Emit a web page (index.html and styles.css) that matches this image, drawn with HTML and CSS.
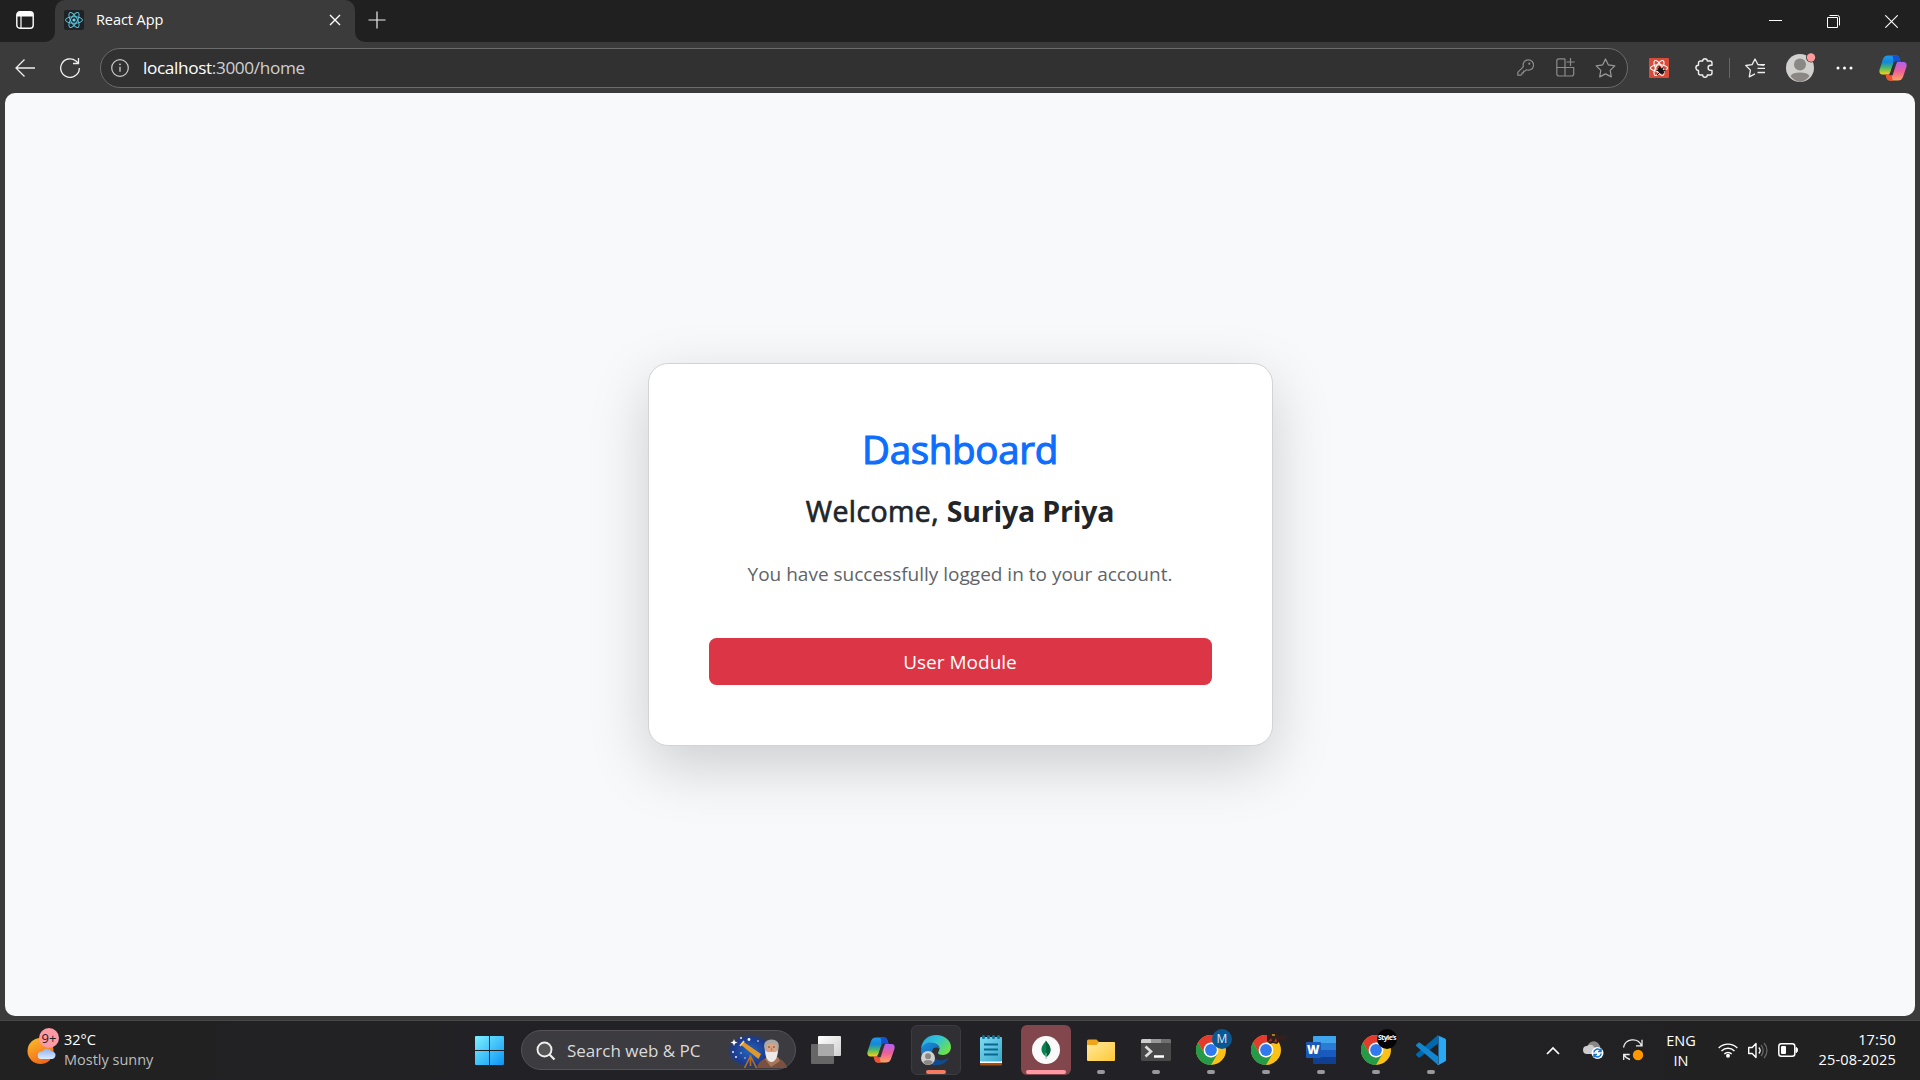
FILE: index.html
```html
<!DOCTYPE html>
<html lang="en">
<head>
<meta charset="utf-8">
<title>React App</title>
<link rel="stylesheet" href="styles.css">
</head>
<body>
<svg class="defs" width="0" height="0">
  <defs>
    <linearGradient id="cpA" x1="0" y1="0" x2="0" y2="1"><stop offset="0" stop-color="#1a9df0"/><stop offset=".35" stop-color="#1687d8"/><stop offset=".65" stop-color="#4bb86a"/><stop offset="1" stop-color="#ffd20a"/></linearGradient>
    <linearGradient id="cpB" x1="0" y1="0" x2="0" y2="1"><stop offset="0" stop-color="#b060f0"/><stop offset=".5" stop-color="#ef5f9a"/><stop offset="1" stop-color="#ffa45c"/></linearGradient>
    <linearGradient id="edgeA" x1="0" y1="0" x2="1" y2=".6"><stop offset="0" stop-color="#2aa5e0"/><stop offset=".5" stop-color="#2fc3d8"/><stop offset="1" stop-color="#6fe04a"/></linearGradient>
    <linearGradient id="edgeB" x1="0" y1="0" x2="1" y2="1"><stop offset="0" stop-color="#1b8fdc"/><stop offset="1" stop-color="#0c4f9c"/></linearGradient>
    <linearGradient id="win" x1="0" y1="0" x2="1" y2="1"><stop offset="0" stop-color="#7df0ff"/><stop offset="1" stop-color="#0a95f5"/></linearGradient>
    <linearGradient id="sun" x1="0" y1="0" x2=".5" y2="1"><stop offset="0" stop-color="#fcc02c"/><stop offset="1" stop-color="#f0691a"/></linearGradient>
    <linearGradient id="cloud" x1="0" y1="0" x2="0" y2="1"><stop offset="0" stop-color="#8fb2f0"/><stop offset="1" stop-color="#d9eafd"/></linearGradient>
    <linearGradient id="tvF" x1="0" y1="0" x2="1" y2="1"><stop offset="0" stop-color="#fff"/><stop offset="1" stop-color="#d0d0d0"/></linearGradient>
    <linearGradient id="folder" x1="0" y1="0" x2="1" y2="1"><stop offset="0" stop-color="#ffe9a0"/><stop offset="1" stop-color="#ffc934"/></linearGradient>
    <linearGradient id="note" x1="0" y1="0" x2="1" y2="1"><stop offset="0" stop-color="#7fdcf2"/><stop offset="1" stop-color="#38a9cc"/></linearGradient>
    <radialGradient id="sky"><stop offset="0" stop-color="#2467bd"/><stop offset=".75" stop-color="#1b3b91"/><stop offset="1" stop-color="#1b3b91" stop-opacity="0"/></radialGradient>
    <symbol id="copilot" viewBox="0 0 28 26">
      <path d="M9 .5h8c2.400 0 3 1.500 3.600 3.500l1 3h-3.800c-2.400 0-3.200 1.200-3.900 3.300l-2 6c-.7 2-1.500 3.200-3.800 3.200H3.500C.7 19.500-.1 17.500.6 14.500L4 4C5 1.500 6.500.5 9 .5z" fill="url(#cpA)"/>
      <path d="M13 .5h4c2.400 0 3 1.500 3.600 3.500l1 3h-3.800c-2 0-2.900.8-3.500 2C14.500 5 14.500 2 13 .5z" fill="#1550d5"/>
      <path d="M19 25.500h-8c-2.400 0-3-1.500-3.600-3.500l-.9-2.500H9c2.300 0 3.100-1.200 3.800-3.200l2-6c.7-2.100 1.500-3.300 3.900-3.300h5.800c2.800 0 3.600 2 2.900 5L24 22c-1 2.500-2.500 3.500-5 3.500z" fill="url(#cpB)"/>
      <path d="M6.500 19.500H9c2.300 0 3.100-1.200 3.800-3.200-.3 3-.2 7 1.200 9.200h-3c-2.400 0-3-1.500-3.600-3.500z" fill="#f3502e"/>
      <path d="M11.300 19.500l3.300-10c.5-1.400 1.300-2.500 2.700-2.500l-.6 1.500-3.600 11z" fill="#333" stroke="#333" stroke-width="1.400"/>
    </symbol>
    <symbol id="chrome" viewBox="0 0 30 30">
      <circle cx="15" cy="15" r="15" fill="#fcc117"/>
      <path d="M15 7.500H28A15 15 0 0 0 2 7.500L8.500 18.800z" fill="#e33b2e"/>
      <path d="M2 7.500A15 15 0 0 0 15 30l6.500-11.200L15 22.500 8.500 18.800z" fill="#259a49"/>
      <circle cx="15" cy="15" r="7.400" fill="#fff"/><circle cx="15" cy="15" r="5.900" fill="#3079ee"/>
    </symbol>
    <symbol id="person" viewBox="0 0 28 28">
      <circle cx="14" cy="14" r="14" fill="#d2d0ce"/><circle cx="14" cy="10.500" r="6" fill="#8a8785"/><path d="M4.500 22c1.500-2.700 5-3.500 9.500-3.500s8 .8 9.500 3.500A14 14 0 0 1 14 28a14 14 0 0 1-9.500-6z" fill="#8a8785"/>
    </symbol>
  </defs>
</svg>

<header class="tabbar">
  <div class="tabbar-menu">
    <svg width="18" height="18" viewBox="0 0 18 18"><rect x=".8" y=".8" width="16.400" height="16.400" rx="3" fill="none" stroke="#fff" stroke-width="1.400"/><path d="M1 4a3 3 0 0 1 3-3h10a3 3 0 0 1 3 3v1.500H1z" fill="#fff"/><path d="M5 5v12" stroke="#fff" stroke-width="1.200"/></svg>
  </div>
  <div class="tab-well">
    <div class="tab">
      <svg width="20" height="20" viewBox="0 0 20 20"><rect width="20" height="20" rx="2" fill="#202124"/><g fill="none" stroke="#58c4dc" stroke-width="1"><ellipse cx="10" cy="10" rx="8.500" ry="3.300"/><ellipse cx="10" cy="10" rx="8.500" ry="3.300" transform="rotate(60 10 10)"/><ellipse cx="10" cy="10" rx="8.500" ry="3.300" transform="rotate(120 10 10)"/></g><circle cx="10" cy="10" r="1.600" fill="#61dafb"/></svg>
      <span class="tab-title">React App</span>
      <svg width="12" height="12" viewBox="0 0 12 12"><path d="M1 1l10 10M11 1L1 11" stroke="#fff" stroke-width="1.400"/></svg>
    </div>
  </div>
  <div class="newtab"><svg width="18" height="18" viewBox="0 0 18 18"><path d="M9 .5v17M.5 9h17" stroke="#eee" stroke-width="1.200"/></svg></div>
  <div class="window-buttons">
    <div><svg width="13" height="13" viewBox="0 0 13 13"><path d="M0 5.500h13" stroke="#fff"/></svg></div>
    <div><svg width="13" height="13" viewBox="0 0 13 13"><path d="M.5 2.500h10v10H.5zM2.500.5h8a2 2 0 0 1 2 2v8" fill="none" stroke="#fff"/></svg></div>
    <div><svg width="13" height="13" viewBox="0 0 13 13"><path d="M.3.300l12.400 12.400M12.700.3L.3 12.700" stroke="#fff" stroke-width="1.100"/></svg></div>
  </div>
</header>

<nav class="toolbar">
  <div class="tool"><svg width="20" height="18" viewBox="0 0 20 18"><path d="M20 9H1M9.500.5L1 9l8.500 8.500" fill="none" stroke="#eee" stroke-width="1.300"/></svg></div>
  <div class="tool"><svg width="20" height="20" viewBox="0 0 20 20"><path d="M19.300 10A9.300 9.300 0 1 1 16 3l2.500 2.500M18.500 0v5.500H13" fill="none" stroke="#eee" stroke-width="1.300"/></svg></div>
  <div class="address">
    <div class="slot info"><svg width="18" height="18" viewBox="0 0 18 18"><circle cx="9" cy="9" r="8.300" fill="none" stroke="#ccc" stroke-width="1.200"/><path d="M9 7.800v5" stroke="#ccc" stroke-width="1.300"/><circle cx="9" cy="5.300" r=".9" fill="#ccc"/></svg></div>
    <div class="url">localhost<span>:3000/home</span></div>
    <div class="slot"><svg width="17" height="17" viewBox="0 0 17 17"><path d="M11 .8a5.200 5.200 0 1 1-1.600 10l-1.500 1.300H6.500v1.700H5v1.400l-1 1H.8v-2.900l5.600-5.600A5.200 5.200 0 0 1 11 .8z" fill="none" stroke="#8c8c8c" stroke-width="1.200" stroke-linejoin="round"/><circle cx="12.300" cy="4.700" r="1.100" fill="#8c8c8c"/></svg></div>
    <div class="slot"><svg width="19" height="19" viewBox="0 0 19 19"><path d="M9 .8H3A2.200 2.200 0 0 0 .8 3v12.800A2.200 2.200 0 0 0 3 18h12.500a2.200 2.200 0 0 0 2.200-2.200V9.500H.8M9 .8V18M14.500 0v8M10.500 4h8.300" fill="none" stroke="#8c8c8c" stroke-width="1.200"/></svg></div>
    <div class="slot"><svg width="21" height="20" viewBox="0 0 21 20"><path d="M10.500 1l2.900 5.900 6.400.9-4.600 4.600 1.100 6.500-5.800-3-5.800 3 1.100-6.500L1.200 7.800l6.400-.9z" fill="none" stroke="#999" stroke-width="1.200" stroke-linejoin="round"/></svg></div>
  </div>
  <div class="tool"><svg width="20" height="20" viewBox="0 0 20 20"><rect width="20" height="20" rx="1" fill="#d94a38"/><g fill="none" stroke="#fff" stroke-width="1.100"><ellipse cx="10" cy="10" rx="8.500" ry="3.200"/><ellipse cx="10" cy="10" rx="8.500" ry="3.200" transform="rotate(60 10 10)"/><ellipse cx="10" cy="10" rx="8.500" ry="3.200" transform="rotate(120 10 10)"/></g><path d="M9 10.500l2-1.500 1.800 1.500 1.700 1.700.8 2.800-2.300 1-2.700-1L9 13z" fill="#161616"/><path d="M7 12l3 1M10 8l1 3M14.500 8.500l-1.500 3M17 12l-3 1M8 17l3-3" stroke="#161616"/></svg></div>
  <div class="tool puzzle"><svg width="20" height="20" viewBox="0 0 20 20"><path d="M5.500 3h2.200a2.300 2.300 0 0 1 4.600 0H15a2 2 0 0 1 2 2v2.200h-1.300a2.600 2.600 0 0 0 0 5.200H17V15a2 2 0 0 1-2 2h-2.700a2.300 2.300 0 0 1-4.600 0H5.500a2 2 0 0 1-2-2v-2.600a2.600 2.600 0 0 1 0-5.200V5a2 2 0 0 1 2-2z" fill="none" stroke="#eee" stroke-width="1.400" stroke-linejoin="round"/></svg></div>
  <div class="divider"></div>
  <div class="tool fav"><svg width="20" height="20" viewBox="0 0 20 20"><path d="M19 7.300l-6-.6L10 1 7.100 6.600.8 7.500l4.600 4.600L4.300 18.800 10 15.800M12.500 10.300H20M12.500 14.500H20M13 6.700h7" fill="none" stroke="#eee" stroke-width="1.300" stroke-linejoin="round"/></svg></div>
  <div class="tool avatar"><svg width="32" height="30" viewBox="0 0 32 30"><use href="#person" x="2" y="1" width="28" height="28"/><circle cx="27" cy="4.500" r="5" fill="#3b3b3b"/><circle cx="27" cy="4.500" r="4.200" fill="#ff9b9b"/></svg></div>
  <div class="tool dots"><svg width="17" height="4" viewBox="0 0 17 4"><g fill="#fff"><circle cx="2" cy="2" r="1.500"/><circle cx="8.500" cy="2" r="1.500"/><circle cx="15" cy="2" r="1.500"/></g></svg></div>
  <div class="tool copilot"><svg width="28" height="26"><use href="#copilot"/></svg></div>
</nav>

<main class="page">
  <section class="card">
    <h2>Dashboard</h2>
    <h4>Welcome, <strong>Suriya Priya</strong></h4>
    <p>You have successfully logged in to your account.</p>
    <button class="btn" type="button">User Module</button>
  </section>
</main>

<footer class="taskbar">
  <div class="weather">
    <div class="weather-icon">
      <svg width="36" height="36" viewBox="0 0 36 36"><circle cx="14.500" cy="21" r="13" fill="url(#sun)"/><path d="M14 29a4 4 0 0 1-.5-7c1-.5 2-.5 2.500-.3a5.500 5.500 0 0 1 9.500-.2c3 0 4 2 4 3.500s-1 4-4 4z" fill="url(#cloud)"/></svg>
      <span class="count">9+</span>
    </div>
    <div class="weather-text"><div>32°C</div><div class="dim">Mostly sunny</div></div>
  </div>
  <div class="app"><svg width="29" height="29" viewBox="0 0 29 29"><path d="M0 1a1 1 0 0 1 1-1h13v14H0zM15 0h13a1 1 0 0 1 1 1v13H15zM0 15h14v14H1a1 1 0 0 1-1-1zM15 15h14v13a1 1 0 0 1-1 1H15z" fill="url(#win)"/></svg></div>
  <div class="search">
    <svg width="20" height="20" viewBox="0 0 20 20"><circle cx="8.500" cy="8.500" r="7" fill="#555" stroke="#eee" stroke-width="1.900"/><path d="M13.500 13.500l5 5" stroke="#eee" stroke-width="2.200"/></svg>
    <span>Search web &amp; PC</span>
    <svg class="search-art" width="60" height="34" viewBox="0 0 60 34">
      <ellipse cx="22" cy="17" rx="23" ry="17" fill="url(#sky)"/>
      <g fill="#fff"><path d="M6 5l1 2.500 2.500 1-2.500 1-1 2.500-1-2.500-2.500-1 2.500-1z"/><circle cx="21" cy="5.500" r="1.400"/><circle cx="13" cy="4" r=".9"/><circle cx="30" cy="7" r=".8"/><circle cx="5" cy="18" r=".9"/><circle cx="8" cy="23" r=".9"/><circle cx="13" cy="19" r=".7"/><circle cx="17" cy="24" r=".7"/></g>
      <path d="M12.500 10.500l2.500-3 18 12.500-2.500 5z" fill="#e0982c"/><path d="M12 12l4-5" stroke="#ffd27a" stroke-width="1.600"/>
      <path d="M22.500 22l-6 12M22.500 22l6 12M22.500 21v11" stroke="#b96e1d" stroke-width="1.600" fill="none"/>
      <path d="M29 34c1-6 5-9 10-10h10c5 1 9 5 10 10z" fill="#7a5141"/><path d="M37 25l6 8 9-6-2-4H39z" fill="#a8765a"/>
      <path d="M36.500 15C35 9 38 5.500 43.500 5.500S52 9 50.500 15l-1 5h-12z" fill="#a9a8a8"/>
      <path d="M38.500 11.500c1-2.500 9-2.500 10 0V19h-10z" fill="#dba382"/>
      <path d="M37.500 16c1.500 3 3 2 6 2s4.500 1 6-2c.8 5-1.500 12-6 12s-6.800-7-6-12z" fill="#ecebea"/><path d="M43.500 13.500v3.500" stroke="#bb7c5b" stroke-width="1.300"/><path d="M40 13h2M45 13h2" stroke="#5b3d30" stroke-width=".9"/>
    </svg>
  </div>
  <div class="apps">
    <div class="app"><svg width="30" height="28" viewBox="0 0 30 28"><rect y="8" width="23" height="20" rx="1" fill="#666"/><rect x="7" width="23" height="20" rx="1" fill="url(#tvF)"/><path d="M7 8h16v12H7z" fill="#aaa"/></svg></div>
    <div class="app"><svg width="28" height="26"><use href="#copilot"/></svg></div>
    <div class="app active"><svg width="30" height="30" viewBox="0 0 30 30">
      <path d="M0 14C1 5 7 0 15 0c9 0 15 6 15 12 0 5-4 8-8 8-3 0-5-1-5-2s1.500-2 1.500-4.500c0-3-3-5-6-5C7 8.500 2 10 0 14z" fill="url(#edgeA)"/>
      <path d="M0 15C1 10 5 7.500 9.500 7.500c5 0 9 3 9 6.500-2-2-6-2-7 1-1.500 4 1 9 6 10.500 4 1.200 7-.5 10-2.500-2.500 4.500-7 7-12.500 7C6 30-.3 23 0 15z" fill="url(#edgeB)"/>
      <path d="M11 16c-.5 5 3 9 8 9.500 3.500.3 6-1 8.500-2.500-2.500 4.500-7 7-12.500 7-5-1-7-9-4-14z" fill="#114b8f"/>
      <use href="#person" x="0" y="16" width="14" height="14"/></svg><i class="mark orange"></i></div>
    <div class="app"><svg width="22" height="32" viewBox="0 0 22 32"><path d="M0 26h22v4.500a1 1 0 0 1-1 1H1a1 1 0 0 1-1-1z" fill="#a34e13"/><path d="M0 26h22v3H0z" fill="#fff"/><rect y="3" width="22" height="24.500" rx="1" fill="url(#note)"/><path d="M4 10.500h14M4 15.500h14M4 20.500h14" stroke="#0b6791" stroke-width="2"/><path d="M3.500 2.500v1M8.500 2.500v1M13.500 2.500v1M18.500 2.500v1" stroke="#15749c" stroke-width="3" stroke-linecap="round"/></svg></div>
    <div class="app alert"><svg width="28" height="28" viewBox="0 0 28 28"><circle cx="14" cy="14" r="14" fill="#fafafa"/><path d="M14 4.500c1 2.200 4.800 4.800 4.500 9.500-.2 3.500-2 5.500-4 7-2-1.500-4.800-3.500-5-7C9.300 9.300 13 6.700 14 4.500z" fill="#0a8153"/><path d="M14 5c1 2 4.500 4.500 4.500 9-.1 3.500-2 5.500-4.200 7z" fill="#06613f"/><path d="M14 17v6" stroke="#9ac0ac" stroke-width="1"/></svg><i class="mark pink"></i></div>
    <div class="app"><svg width="28" height="22" viewBox="0 0 28 22"><path d="M0 2a1.500 1.500 0 0 1 1.500-1.500h8L12 3h14.500A1.500 1.500 0 0 1 28 4.500V10H0z" fill="#eea51c"/><path d="M0 6h9.500L12 3h15a1 1 0 0 1 1 1v17a1 1 0 0 1-1 1H1a1 1 0 0 1-1-1z" fill="url(#folder)"/></svg><i class="mark"></i></div>
    <div class="app"><svg width="30" height="22" viewBox="0 0 30 22"><rect width="30" height="22" rx="1.500" fill="#494949"/><path d="M1.500 0H10v4H0V1.500A1.500 1.500 0 0 1 1.500 0z" fill="#ccc"/><path d="M10 0h10v4H10z" fill="#999"/><path d="M20 0h8.500A1.500 1.500 0 0 1 30 1.500V4H20z" fill="#707070"/><path d="M4.500 7.500l5.500 5-5.500 5" fill="none" stroke="#ddd" stroke-width="2.600"/><path d="M13 17.500h10" stroke="#fff" stroke-width="2.500"/></svg><i class="mark"></i></div>
    <div class="app"><svg width="30" height="30"><use href="#chrome"/></svg><span class="profile">M</span><i class="mark"></i></div>
    <div class="app"><svg width="30" height="30"><use href="#chrome"/></svg><svg class="scene" width="20" height="12" viewBox="0 0 20 12"><path d="M0 2l5-2 2 2 3-1 3 2 6-1 1 3-4 3-3-1-3 4-4-1-3 1-3-3z" fill="#33201d"/><path d="M1 9l3-4 1 3zM7 9l2-4 1 4z" fill="#ac3328"/><path d="M5 1h3v2H5z" fill="#a67822"/></svg><i class="mark"></i></div>
    <div class="app"><svg width="30" height="28" viewBox="0 0 30 28"><path d="M8 0h20.500A1 1 0 0 1 30 1v6H7V1a1 1 0 0 1 1-1z" fill="#41a5ee"/><path d="M7 7h23v7H7z" fill="#2b7cd3"/><path d="M7 14h23v7H7z" fill="#185abd"/><path d="M7 21h23v6a1 1 0 0 1-1 1H8a1 1 0 0 1-1-1z" fill="#103f91"/><rect y="6" width="15" height="16" rx="1" fill="#1959b8"/></svg><span class="word">W</span><i class="mark"></i></div>
    <div class="app"><svg width="30" height="30"><use href="#chrome"/></svg><span class="brand">Style’s</span><i class="mark"></i></div>
    <div class="app"><svg width="30" height="30" viewBox="0 0 30 30"><path d="M22 0v8.500L4 22.300c-.5.400-1.200.4-1.600 0l-2-1.900c-.5-.5-.5-1.200 0-1.700z" fill="#0069ad"/><path d="M22 30v-8.500L4 7.700c-.5-.4-1.200-.4-1.600 0l-2 1.900c-.5.500-.5 1.200 0 1.700z" fill="#1287d0"/><path d="M21 0l8 3.500c.6.300 1 .9 1 1.500v20c0 .7-.4 1.200-1 1.500L22.500 30c-.6.300-1 0-1.500-.5 1 .5 1.500-.2 1.500-1V1.500c0-.8-.5-1.500-1.500-1.500z" fill="#29a8f3"/></svg><i class="mark"></i></div>
  </div>
  <div class="tray">
    <div class="tray-icon"><svg width="14" height="9" viewBox="0 0 14 9"><path d="M1 8l6-6 6 6" fill="none" stroke="#fff" stroke-width="1.700"/></svg></div>
    <div class="tray-icon"><svg width="21" height="18" viewBox="0 0 21 18"><path d="M5 5a6 6 0 0 1 10-3l2 3 1 6-9-2z" fill="#888"/><path d="M4 13a4 4 0 0 1 0-8c2-2 6-1.500 7 1l4 3-3 4z" fill="#ccc"/><circle cx="14.500" cy="12" r="6" fill="#fff"/><path d="M10.800 11.500a3.800 3.800 0 0 1 6.700-2M18.200 12.500a3.800 3.800 0 0 1-6.700 2M18 7.500v3h-3M11 16.500v-3h3" fill="none" stroke="#1877c9" stroke-width="1.500"/></svg></div>
    <div class="tray-icon"><svg width="22" height="22" viewBox="0 0 22 22"><path d="M1.500 8.500a9.500 9.500 0 0 1 18-2M20 .8v6h-6M8 20.500a9.500 9.500 0 0 1-6-5M1.700 21v-5.500h6" fill="none" stroke="#eee" stroke-width="1.300"/><circle cx="16" cy="16" r="5.200" fill="#ff9800"/></svg></div>
    <div class="lang"><div>ENG</div><div>IN</div></div>
    <div class="status"><svg width="20" height="16" viewBox="0 0 20 16"><g fill="none" stroke="#fff" stroke-width="1.400"><path d="M.7 6a13 13 0 0 1 18.600 0M3.500 9a9.200 9.200 0 0 1 13 0M6.300 12a5.300 5.300 0 0 1 7.400 0"/></g><circle cx="10" cy="13.700" r="2" fill="#fff"/></svg></div>
    <div class="status"><svg width="20" height="17" viewBox="0 0 20 17"><path d="M.7 5.500h3.500L8 1.500v14l-3.800-4H.7z" fill="none" stroke="#fff" stroke-width="1.400" stroke-linejoin="round"/><path d="M10.800 5.500a4.500 4.500 0 0 1 0 6" fill="none" stroke="#fff" stroke-width="1.300"/><path d="M13 3a8 8 0 0 1 0 11M16 1a11 11 0 0 1 0 15" fill="none" stroke="#666" stroke-width="1.300"/></svg></div>
    <div class="status"><svg width="20" height="14" viewBox="0 0 20 14"><rect x=".8" y=".8" width="16" height="12.400" rx="2.500" fill="none" stroke="#fff" stroke-width="1.500"/><path d="M18 4.500c2 0 2 5 0 5z" fill="#fff" stroke="#fff"/><rect x="3" y="3" width="5" height="8" rx="1" fill="#fff"/></svg></div>
    <div class="clock"><div>17:50</div><div>25-08-2025</div></div>
  </div>
</footer>
</body>
</html>
```
FILE: styles.css
```css
* { box-sizing: border-box; }
body {
  margin: 0;
  width: 1920px;
  height: 1080px;
  overflow: hidden;
  display: flex;
  flex-direction: column;
  background: #3b3b3b;
  color: #fff;
  font-family: "Open Sans", "Noto Sans", sans-serif;
}
svg { display: block; flex: none; }
.defs { position: absolute; }

/* Tab strip */
.tabbar { height: 42px; flex: none; display: flex; background: #3b3b3b; }
.tabbar-menu {
  width: 55px;
  display: flex;
  align-items: center;
  padding: 0 0 2px 16px;
  border-radius: 0 0 10px 0;
  background: #202020;
}
.tab-well { display: flex; background: linear-gradient(#202020 50%, #3b3b3b 50%); }
.tab {
  width: 300px;
  display: flex;
  align-items: center;
  padding: 0 14px 2px 9px;
  background: #3b3b3b;
  border-radius: 10px 10px 0 0;
}
.tab-title { flex: 1; margin-left: 12px; font-size: 14.500px; letter-spacing: -.08px; line-height: 20px; }
.newtab {
  width: 44px;
  display: flex;
  align-items: center;
  justify-content: center;
  padding-bottom: 3px;
  background: #202020;
  border-radius: 0 0 0 10px;
}
.window-buttons { flex: 1; display: flex; justify-content: flex-end; padding-top: 1px; background: #202020; }
.window-buttons div { width: 58px; display: flex; align-items: center; justify-content: center; }

/* Navigation bar */
.toolbar { height: 51px; flex: none; display: flex; align-items: center; padding-left: 2px; }
.tool { width: 45px; display: flex; justify-content: center; flex: none; }
.address {
  width: 1528px;
  height: 40px;
  margin: 0 8px;
  padding-right: 2px;
  display: flex;
  align-items: center;
  border: 1px solid #6b6b6b;
  border-radius: 20px;
  background: #313131;
}
.slot { width: 40px; display: flex; justify-content: center; }
.info { width: 38px; }
.url { flex: 1; padding-left: 4px; font-size: 17.200px; letter-spacing: -.36px; line-height: 24px; }
.url span { color: #d0d0d0; }
.puzzle { width: 46px; padding-left: 1px; }
.divider { width: 1px; height: 20px; margin: 0 2px; background: #666; }
.fav { width: 46px; }
.avatar { width: 44px; }
.dots { width: 45px; }
.copilot { width: 51px; }

/* Page content */
.page {
  height: 923px;
  flex: none;
  margin: 0 5px;
  display: flex;
  justify-content: center;
  align-items: center;
  background: #f8f9fb;
  border-radius: 10px;
}
.card {
  width: 625px;
  height: 383px;
  padding: 60px;
  display: flex;
  flex-direction: column;
  text-align: center;
  color: #212529;
  background: #fff;
  border: 1px solid #d2d3d4;
  border-radius: 20px;
  box-shadow: 0 20px 60px rgba(0, 0, 0, .175);
}
.card h2 {
  margin: 1px 0 20px;
  font-size: 38.500px;
  line-height: 48px;
  font-weight: 500;
  letter-spacing: -.3px;
  color: #0d6efd;
  -webkit-text-stroke: 1.100px #0d6efd;
}
.card h4 { margin: 0 0 30px; font-size: 28.500px; line-height: 36px; font-weight: 500; letter-spacing: .4px; -webkit-text-stroke: .7px #212529; }
.card strong { font-weight: 700; letter-spacing: -.2px; -webkit-text-stroke: 0; }
.card p { margin: 0; font-size: 19px; line-height: 30px; color: #5f6468; }
.btn {
  height: 47px;
  flex: none;
  margin-top: auto;
  padding: 2px 0 0;
  border: 0;
  border-radius: 7.500px;
  background: #dc3545;
  color: #fff;
  font: 19px/45px "Open Sans", "Noto Sans", sans-serif;
}

/* Taskbar */
.taskbar {
  height: 60px;
  flex: none;
  margin-top: 4px;
  display: flex;
  align-items: center;
  background: linear-gradient(90deg, #212121, #222126 30%, #222126 65%, #212121);
  border-top: 1px solid #474747;
  font-size: 14.500px;
  line-height: 20px;
}
.weather { width: 462px; flex: none; display: flex; align-items: center; padding-left: 26px; }
.weather-icon { position: relative; width: 38px; height: 44px; padding-top: 1px; }
.weather-text { padding-bottom: 2px; }
.count {
  position: absolute;
  left: 13px;
  top: -1px;
  width: 20px;
  height: 20px;
  border-radius: 50%;
  background: #ff99a4;
  color: #222;
  text-align: center;
  line-height: 20px;
  font-size: 13px;
}
.dim { color: #bdbdbd; }
.search {
  width: 275px;
  height: 40px;
  flex: none;
  margin: 0 2px 1px 4px;
  padding: 1px 7px 0 14px;
  display: flex;
  align-items: center;
  gap: 11px;
  border: 1px solid #555358;
  border-radius: 20px;
  background: #3c3b3f;
  color: #dadada;
  font-size: 17px;
  white-space: nowrap;
}
.search-art { margin-left: auto; }
.apps { display: flex; margin-bottom: 1px; }
.app { position: relative; width: 55px; height: 50px; flex: none; display: flex; align-items: center; justify-content: center; }
.active, .alert { width: 50px; margin: 0 2.500px; border-radius: 6px; }
.active { background: #302f34; border: 1px solid #3c3b3f; }
.alert { background: #82474d; }
.mark { position: absolute; bottom: 1px; left: calc(50% - 4px); width: 8px; height: 4px; border-radius: 2px; background: #99989b; }
.mark.orange { width: 20px; left: calc(50% - 10px); bottom: 0; background: #f47b62; }
.mark.pink { width: 40px; left: calc(50% - 20px); background: #ff99a4; }
.profile, .brand { position: absolute; left: 29px; top: 4px; width: 20px; height: 20px; border-radius: 50%; text-align: center; line-height: 20px; }
.profile { background: #0a5795; color: #d7e9fa; font-size: 12px; }
.brand { background: #050505; color: #fff; font-size: 7px; line-height: 17px; letter-spacing: -.6px; font-weight: 700; }
.scene { position: absolute; left: 29px; top: 8px; }
.word { position: absolute; left: 14px; top: 15px; font-size: 12px; font-weight: 800; }

.tray { margin-left: auto; display: flex; align-items: center; padding: 0 24px 1px 0; }
.tray-icon { width: 40px; display: flex; justify-content: center; }
.lang { width: 56px; margin-right: 4px; text-align: center; padding-top: 1px; }
.status { width: 30px; display: flex; justify-content: center; }
.clock { width: 93px; text-align: right; white-space: nowrap; letter-spacing: .18px; }
```
